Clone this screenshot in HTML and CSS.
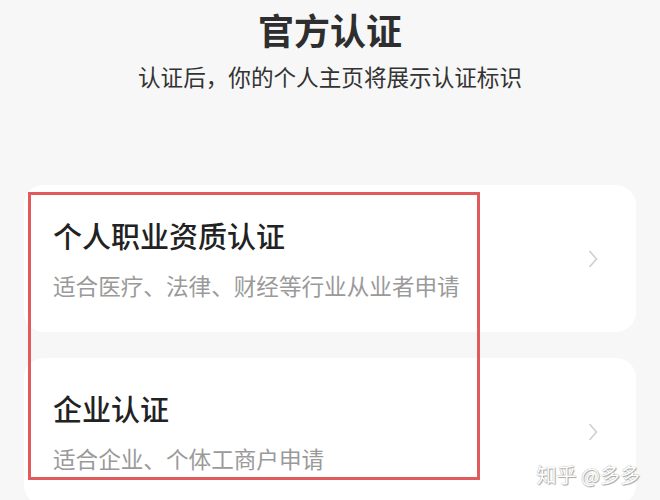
FILE: index.html
```html
<!DOCTYPE html>
<html lang="zh-CN">
<head>
  <meta charset="UTF-8">
  <meta name="viewport" content="width=device-width,initial-scale=1.0">
  <title>官方认证</title>
  <link rel="stylesheet" href="styles.css">
</head>
<body>
  <header class="page-head">
    <h1>官方认证</h1>
    <p>认证后，你的个人主页将展示认证标识</p>
  </header>

  <section class="cards">
    <a class="card" href="#">
      <div class="card-text">
        <h2>个人职业资质认证</h2>
        <p>适合医疗、法律、财经等行业从业者申请</p>
      </div>
      <svg class="chevron" viewBox="0 0 10 20" width="10" height="20">
        <path d="M1.5 2 L8.5 10 L1.5 18" fill="none" stroke="#cfcfcf" stroke-width="1.6"/>
      </svg>
    </a>
    <a class="card" href="#">
      <div class="card-text">
        <h2>企业认证</h2>
        <p>适合企业、个体工商户申请</p>
      </div>
      <svg class="chevron" viewBox="0 0 10 20" width="10" height="20">
        <path d="M1.5 2 L8.5 10 L1.5 18" fill="none" stroke="#cfcfcf" stroke-width="1.6"/>
      </svg>
    </a>

    <!-- annotation frame drawn over both cards -->
    <div class="highlight"></div>
    <span class="watermark">知乎 @多多</span>
  </section>
</body>
</html>
```

FILE: styles.css
```css
:root {
  --bg: #f7f7f7;
  --card-bg: #fff;
  --text: #333;
  --muted: #9a9a9a;
  --mark: #e05a5e;
  --radius: 20px;
}
*, *::before, *::after { box-sizing: border-box; }
body {
  margin: 0;
  height: 500px;
  overflow: hidden;
  background: var(--bg);
  color: var(--text);
  font-family: "Noto Sans CJK SC", "Noto Sans", sans-serif;
}

.page-head {
  text-align: center;
  padding-top: 4px;
}
.page-head h1 {
  margin: 0;
  font-size: 36px;
  line-height: 50px;
  font-weight: 700;
  color: #2e2e2e;
}
.page-head p {
  margin: 7px 0 0;
  font-size: 22.6px;
  line-height: 32px;
  color: #333;
}

.cards {
  position: relative;
  display: flex;
  flex-direction: column;
  gap: 26px;
  margin-top: 92px;
  padding: 0 24px;
}
.card {
  display: flex;
  align-items: center;
  justify-content: space-between;
  height: 147px;
  padding: 0 38px 0 29px;
  background: var(--card-bg);
  border-radius: var(--radius);
  text-decoration: none;
  color: inherit;
}
.card-text h2 {
  margin: 0;
  font-size: 29px;
  line-height: 40px;
  font-weight: 500;
  color: #222;
}
.card-text p {
  margin: 15px 0 0;
  font-size: 22.6px;
  line-height: 32px;
  color: var(--muted);
}
.chevron { flex: none; }

.highlight {
  position: absolute;
  left: 28px;
  top: 7px;
  width: 452px;
  height: 288px;
  border: 3px solid var(--mark);
  pointer-events: none;
}
.watermark {
  position: absolute;
  right: 20px;
  top: 275px;
  font-size: 20px;
  color: #fff;
  text-shadow: 0 0 1px #888, 1px 1px 1px #aaa;
}
```
